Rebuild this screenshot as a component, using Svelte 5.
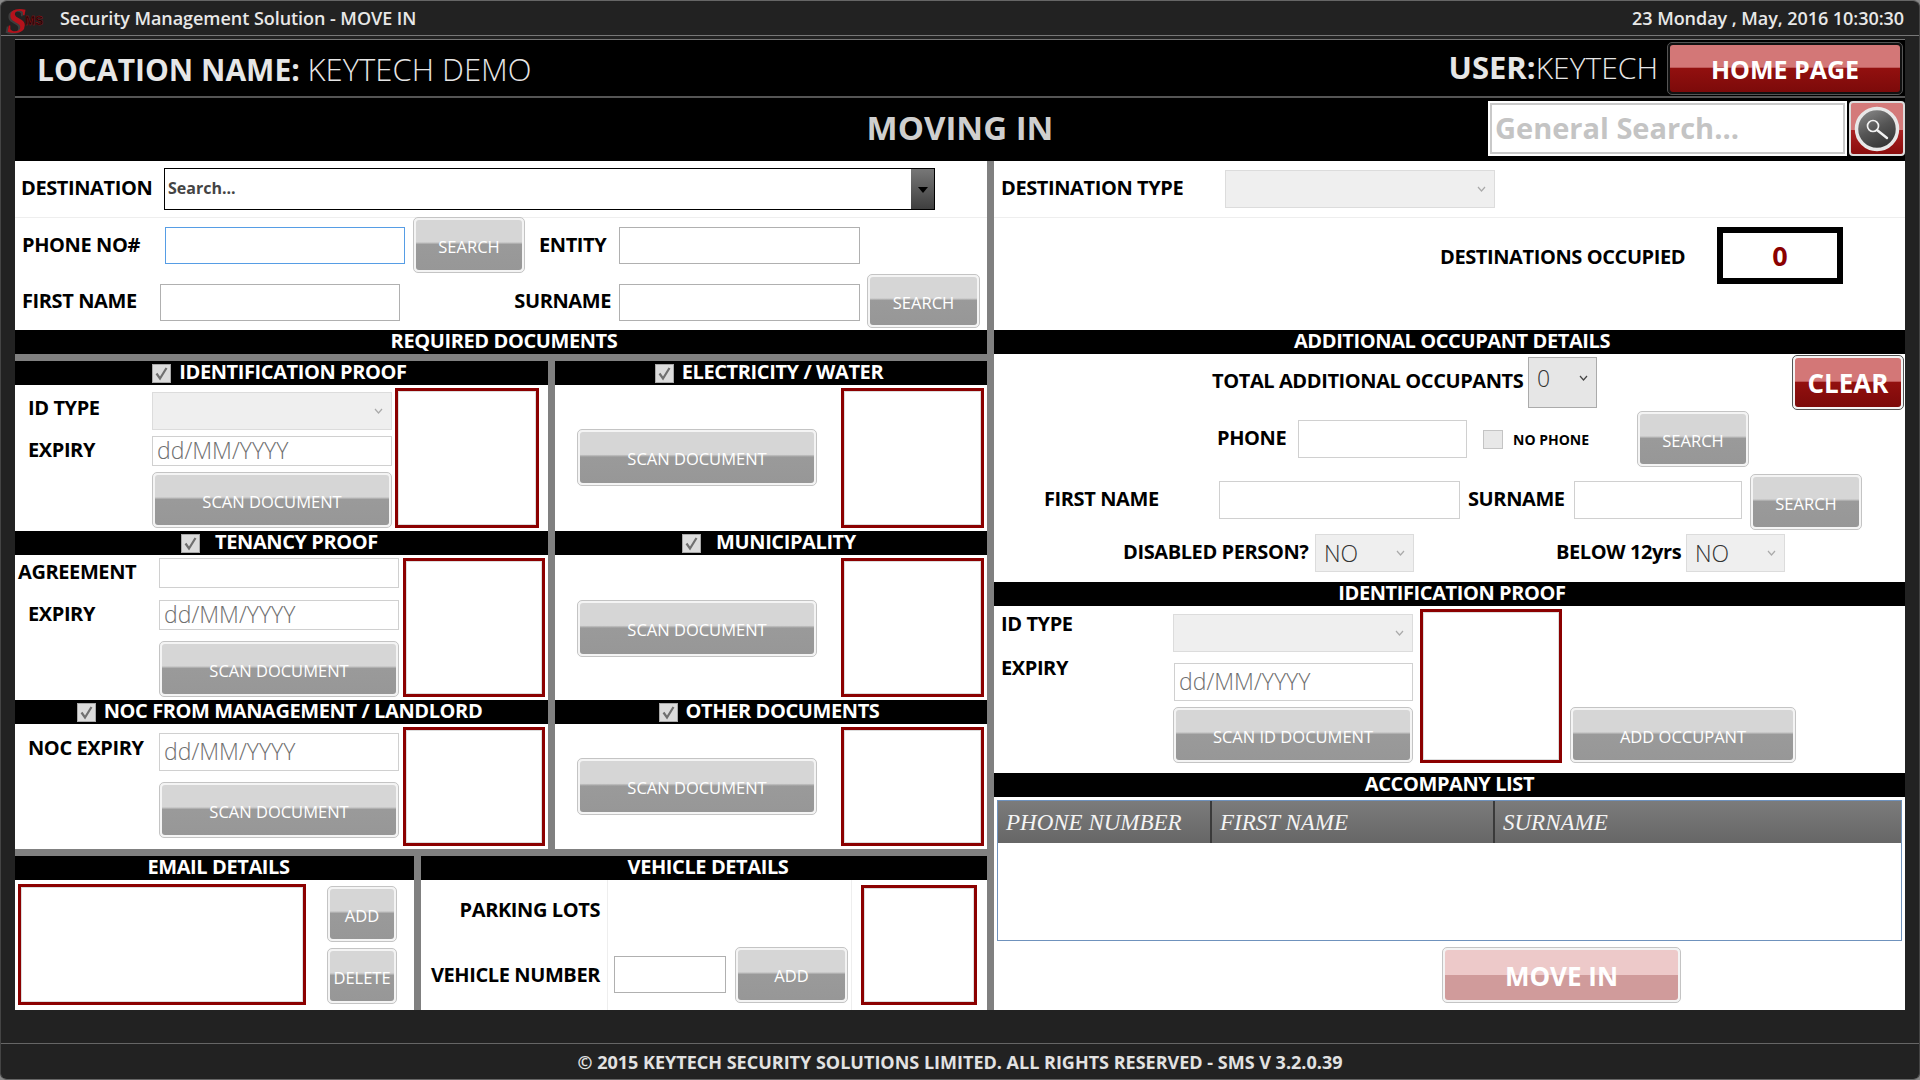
<script>
	const chevron = 'M1 1 L4.5 5 L8 1';
</script>

{#snippet btn(text, cls = '')}
	<button type="button" class={`btn ${cls}`}><span>{text}</span></button>
{/snippet}

{#snippet sel(text, cls = '')}
	<div class={`sel ${cls}`}>
		<span>{text}</span>
		<svg width="9" height="6" viewBox="0 0 9 6"><path d={chevron} fill="none" stroke="currentColor" stroke-width="1.2" /></svg>
	</div>
{/snippet}

{#snippet check()}
	<svg class="check" width="19" height="19" viewBox="0 0 19 19">
		<rect x="0.5" y="0.5" width="18" height="18" fill="#dcdcdc" stroke="#a8a8a8" />
		<path d="M4.5 9.5 L8 14.5 L14.5 4" fill="none" stroke="#707070" stroke-width="2.2" />
	</svg>
{/snippet}

{#snippet head(text, cls = '', checked = false)}
	<div class={`head ${cls}`}>
		{#if checked}{@render check()}{/if}
		<span>{text}</span>
	</div>
{/snippet}

<div class="window">
	<header class="titlebar">
		<svg class="logo" width="46" height="34" viewBox="0 0 46 34">
			<text x="6" y="32" class="logo-s">S</text>
			<text x="24" y="24" class="logo-ms">MS</text>
		</svg>
		<span class="app-title">Security Management Solution - MOVE IN</span>
		<span class="clock">23 Monday , May, 2016 10:30:30</span>
	</header>

	<main class="content">
		<div class="loc-bar">
			<div class="loc"><b>LOCATION NAME:</b> <span>KEYTECH DEMO</span></div>
			<div class="user"><b>USER:</b><span>KEYTECH</span></div>
			{@render btn('HOME PAGE', 'red home')}
		</div>

		<div class="move-bar">
			<h1>MOVING IN</h1>
			<div class="general">
				<input class="general-input" placeholder="General Search..." />
				<button type="button" class="glass" aria-label="Search">
					<svg width="48" height="48" viewBox="0 0 48 48">
						<defs>
							<linearGradient id="orb" x1="0.2" y1="0" x2="0.7" y2="1">
								<stop offset="0" stop-color="#8a8a8a" />
								<stop offset="0.5" stop-color="#555" />
								<stop offset="1" stop-color="#333" />
							</linearGradient>
						</defs>
						<circle cx="24" cy="24" r="20.5" fill="url(#orb)" stroke="#e8e8e8" stroke-width="3.5" />
						<circle cx="20" cy="21" r="5.5" fill="none" stroke="#f2f2f2" stroke-width="1.7" />
						<path d="M24 25 L34 33" stroke="#f2f2f2" stroke-width="2.4" stroke-linecap="round" />
					</svg>
				</button>
			</div>
		</div>

		<div class="columns">
			<section class="left">
				<div class="row dest-row">
					<span class="lab lab-dest">DESTINATION</span>
					<div class="combo">
						<span>Search...</span>
						<i class="combo-arrow"></i>
					</div>
				</div>
				<div class="row phone-row">
					<span class="lab lab-phone">PHONE NO#</span>
					<input class="inp focus w240" />
					{@render btn('SEARCH', 'search-a')}
					<span class="lab lab-entity">ENTITY</span>
					<input class="inp w241" />
				</div>
				<div class="row name-row">
					<span class="lab lab-first">FIRST NAME</span>
					<input class="inp w240" />
					<span class="lab lab-surname">SURNAME</span>
					<input class="inp w241" />
					{@render btn('SEARCH', 'search-b')}
				</div>

				{@render head('REQUIRED DOCUMENTS', 'head-req')}

				<div class="docs">
					<div class="doc">
						{@render head('IDENTIFICATION PROOF', 'sub', true)}
						<div class="panel form-id">
							<span class="lab pad13 mid">ID TYPE</span>
							{@render sel('', 'bottom h38')}
							<div class="scan scan-tall"></div>
							<span class="lab pad13 mid">EXPIRY</span>
							<input class="inp date h30" placeholder="dd/MM/YYYY" />
							{@render btn('SCAN DOCUMENT', 'col2')}
						</div>
					</div>
					<div class="doc">
						{@render head('ELECTRICITY / WATER', 'sub', true)}
						<div class="panel side side-a">
							{@render btn('SCAN DOCUMENT', 'side-btn')}
							<div class="scan"></div>
						</div>
					</div>

					<div class="doc">
						{@render head('TENANCY PROOF', 'sub wide', true)}
						<div class="panel form-ten">
							<span class="lab pad3 mid">AGREEMENT</span>
							<input class="inp h30" />
							<div class="scan scan-tall"></div>
							<span class="lab pad13 mid">EXPIRY</span>
							<input class="inp date h30 bottom" placeholder="dd/MM/YYYY" />
							{@render btn('SCAN DOCUMENT', 'col2')}
						</div>
					</div>
					<div class="doc">
						{@render head('MUNICIPALITY', 'sub wide', true)}
						<div class="panel side side-b">
							{@render btn('SCAN DOCUMENT', 'side-btn')}
							<div class="scan"></div>
						</div>
					</div>

					<div class="doc">
						{@render head('NOC FROM MANAGEMENT / LANDLORD', 'sub', true)}
						<div class="panel form-noc">
							<span class="lab pad13 mid">NOC EXPIRY</span>
							<input class="inp date h38 bottom" placeholder="dd/MM/YYYY" />
							<div class="scan scan-tall"></div>
							{@render btn('SCAN DOCUMENT', 'col2 noc-btn')}
						</div>
					</div>
					<div class="doc">
						{@render head('OTHER DOCUMENTS', 'sub', true)}
						<div class="panel side side-c">
							{@render btn('SCAN DOCUMENT', 'side-btn')}
							<div class="scan"></div>
						</div>
					</div>
				</div>

				<div class="bottom-row">
					<div class="doc">
						{@render head('EMAIL DETAILS', 'sub email-head')}
						<div class="panel email">
							<div class="scan email-box"></div>
							<div class="email-btns">
								{@render btn('ADD', 'small')}
								{@render btn('DELETE', 'small')}
							</div>
						</div>
					</div>
					<div class="doc">
						{@render head('VEHICLE DETAILS', 'sub veh-head')}
						<div class="panel vehicle">
							<span class="lab veh-lab">PARKING LOTS</span>
							<div class="veh-cell"></div>
							<div class="scan veh-box"></div>
							<span class="lab veh-lab">VEHICLE NUMBER</span>
							<div class="veh-cell veh-fields">
								<input class="inp veh-input" />
								{@render btn('ADD', 'veh-add')}
							</div>
						</div>
					</div>
				</div>
			</section>

			<section class="right">
				<div class="row dest-row">
					<span class="lab lab-type">DESTINATION TYPE</span>
					{@render sel('', 'w270 h38')}
				</div>
				<div class="occupied">
					<span class="lab lab-occ">DESTINATIONS OCCUPIED</span>
					<div class="occ-box">0</div>
				</div>

				{@render head('ADDITIONAL OCCUPANT DETAILS', 'head-add')}

				<div class="occ-form">
					<div class="row occ-a">
						<span class="lab lab-total">TOTAL ADDITIONAL OCCUPANTS</span>
						{@render sel('0', 'total')}
						{@render btn('CLEAR', 'red clear')}
					</div>
					<div class="row occ-b">
						<span class="lab lab-ophone">PHONE</span>
						<input class="inp ophone" />
						<i class="nophone-box"></i>
						<span class="nophone">NO PHONE</span>
						{@render btn('SEARCH', 'search-c')}
					</div>
					<div class="row occ-c">
						<span class="lab lab-ofirst">FIRST NAME</span>
						<input class="inp ofirst" />
						<span class="lab lab-osur">SURNAME</span>
						<input class="inp osur" />
						{@render btn('SEARCH', 'search-d')}
					</div>
					<div class="row occ-d">
						<span class="lab lab-dis">DISABLED PERSON?</span>
						{@render sel('NO', 'yesno')}
						<span class="lab lab-below">BELOW 12yrs</span>
						{@render sel('NO', 'yesno')}
					</div>
				</div>

				{@render head('IDENTIFICATION PROOF', 'head-add')}

				<div class="panel form-occ">
					<span class="lab occ-type">ID TYPE</span>
					{@render sel('', 'bottom h38')}
					<div class="scan scan-tall"></div>
					<span class="lab occ-exp">EXPIRY</span>
					<input class="inp date h38 bottom occ-date" placeholder="dd/MM/YYYY" />
					{@render btn('SCAN ID DOCUMENT', 'col2 occ-btn')}
					{@render btn('ADD OCCUPANT', 'occ-add')}
				</div>

				{@render head('ACCOMPANY LIST')}

				<div class="table">
					<div class="thead">
						<span class="th th1">PHONE NUMBER</span>
						<span class="th th2">FIRST NAME</span>
						<span class="th">SURNAME</span>
					</div>
				</div>
				{@render btn('MOVE IN', 'move')}
			</section>
		</div>
	</main>

	<footer class="footer">© 2015 KEYTECH SECURITY SOLUTIONS LIMITED. ALL RIGHTS RESERVED - SMS V 3.2.0.39</footer>
</div>

<style>
	:global(body) {
		background: #8a8a8a;
	}
	.window {
		box-sizing: border-box;
		width: 1920px;
		height: 1080px;
		display: flex;
		flex-direction: column;
		background: #222;
		border: 1px solid #666;
		border-left-color: #444;
		border-right-color: #444;
		border-radius: 7px;
		overflow: hidden;
		font-family: 'Open Sans', 'Noto Sans', sans-serif;
	}
	.titlebar {
		height: 34px;
		flex: none;
		display: flex;
		align-items: center;
		border-bottom: 1px solid #777;
		color: #e8e8e8;
		font-size: 18px;
		font-weight: 600;
		letter-spacing: -0.05px;
	}
	.logo {
		overflow: visible;
	}
	.logo-s {
		font: bold italic 36px 'Liberation Serif', serif;
		fill: #b5121b;
		filter: drop-shadow(-2px 1px 0 #3d3d3d);
	}
	.logo-ms {
		font: bold 12px 'Liberation Sans', sans-serif;
		fill: #1a0505;
		stroke: #a01015;
		stroke-width: 0.4px;
	}
	.app-title {
		margin: -1px 0 0 13px;
	}
	.clock {
		margin: 0 15px 0 auto;
	}
	.content {
		flex: none;
		margin: 3px 14px 0;
		width: 1890px;
		border-top: 1px solid #777;
		color: #000;
	}

	.loc-bar {
		height: 56px;
		display: flex;
		align-items: center;
		background: #000;
		border-bottom: 2px solid #555;
		color: #e6e6e6;
		font-size: 30px;
		white-space: nowrap;
	}
	.loc {
		margin: 2px 0 0 22px;
		font-weight: 300;
	}
	.loc span {
		font-size: 31px;
	}
	.loc b, .user b {
		font-weight: 700;
	}
	.user {
		margin: -3px 9px 0 auto;
		font-weight: 300;
	}
	.user b {
		font-size: 31px;
	}
	.move-bar {
		height: 63px;
		position: relative;
		display: flex;
		align-items: center;
		justify-content: center;
		background: #000;
	}
	.move-bar h1 {
		margin: -4px 0 0;
		font-size: 33px;
		font-weight: 700;
		color: #cfcfcf;
	}
	.general {
		position: absolute;
		right: 0;
		top: 3px;
		display: flex;
	}
	.general-input {
		box-sizing: border-box;
		width: 359px;
		height: 55px;
		border: 2px solid #fff;
		outline: 2px solid #c9c9c9;
		outline-offset: -4px;
		padding: 0 4px 2px 5px;
		font: 700 29px 'Open Sans', sans-serif;
	}
	.general-input::placeholder {
		color: #c4c4c4;
	}
	.glass {
		box-sizing: border-box;
		width: 56px;
		height: 55px;
		padding: 0;
		margin-left: 2px;
		border: 2px solid #dcdcdc;
		border-radius: 4px;
		background: linear-gradient(#d47a7a 0 52%, #a22 52%, #8a0d0d);
		display: flex;
		align-items: center;
		justify-content: center;
	}

	.columns {
		display: grid;
		grid-template-columns: 972px 911px;
		column-gap: 7px;
		background: #808080;
		height: 849px;
	}
	.left, .right {
		display: flex;
		flex-direction: column;
		background: #fff;
		min-width: 0;
	}
	.row {
		display: flex;
		align-items: center;
		flex: none;
		white-space: nowrap;
	}
	.dest-row {
		height: 56px;
		border-bottom: 1px solid #eee;
	}
	.phone-row, .name-row {
		height: 56px;
	}
	.lab {
		flex: none;
		box-sizing: border-box;
		font-size: 20px;
		line-height: 28px;
		padding-bottom: 2px;
		font-weight: 700;
		letter-spacing: -0.4px;
		color: #000;
		white-space: nowrap;
	}
	.lab-dest {
		width: 143px;
		margin-left: 6px;
	}
	.lab-phone {
		width: 143px;
		margin-left: 7px;
	}
	.lab-first {
		width: 138px;
		margin-left: 7px;
	}
	.lab-entity {
		width: 80px;
		margin-left: 14px;
	}
	.lab-surname {
		width: 211px;
		text-align: right;
		margin-right: 8px;
	}
	.lab-type {
		width: 224px;
		margin-left: 7px;
	}

	.inp {
		box-sizing: border-box;
		flex: none;
		min-width: 0;
		height: 37px;
		padding: 0 4px;
		border: 1px solid #d0d0d0;
		background: #fff;
		border-radius: 0;
		outline: none;
	}
	.w240 { width: 240px; }
	.w241 { width: 241px; }
	.h30 { height: 30px; }
	.h38 { height: 38px; }
	.focus {
		border-color: #569de5;
	}
	.name-row .inp, .phone-row .inp:not(.focus) {
		border-color: #b0b0b0;
	}
	.phone-row .inp {
		margin-top: -2px;
	}
	.date {
		font: 300 23px 'Open Sans', sans-serif;
		padding: 0 4px 2px;
	}
	.date::placeholder {
		color: #6f6f6f;
		opacity: 1;
	}
	.bottom {
		align-self: end;
	}

	.combo {
		box-sizing: border-box;
		width: 771px;
		height: 42px;
		display: flex;
		align-items: center;
		justify-content: space-between;
		border: 1px solid #000;
		padding-left: 3px;
		font-size: 16px;
		font-weight: 700;
		color: #444;
	}
	.combo span {
		margin-top: -2px;
	}
	.combo-arrow {
		width: 23px;
		height: 40px;
		background: linear-gradient(#777, #3f3f3f);
		display: flex;
		align-items: center;
		justify-content: center;
	}
	.combo-arrow::after {
		content: '';
		border: 5px solid transparent;
		border-top: 6px solid #000;
		margin-top: 6px;
	}

	.sel {
		box-sizing: border-box;
		flex: none;
		display: flex;
		align-items: center;
		justify-content: space-between;
		padding: 0 8px;
		background: #efefef;
		border: 1px solid #dcdcdc;
		color: #aaa;
	}
	.w270 { width: 270px; }
	.sel span {
		font: 300 23px 'Open Sans', sans-serif;
		color: #333;
	}

	.btn {
		box-sizing: border-box;
		flex: none;
		display: block;
		padding: 2px;
		border: 1px solid #c4c4c4;
		border-radius: 5px;
		background: #f4f4f4;
		font-family: inherit;
	}
	.btn span {
		display: flex;
		align-items: center;
		justify-content: center;
		height: 100%;
		border-radius: 3px;
		padding-top: 2px;
		box-sizing: border-box;
		background: linear-gradient(#d6d6d6 0 44%, #bbb 46%, #9a9a9a 49%, #979797 100%);
		color: #fff;
		font-size: 16.5px;
		font-weight: 400;
		white-space: nowrap;
	}
	.red {
		border-color: #555;
	}
	.red span {
		background: linear-gradient(#d37777 0 47%, #92100f 50%, #7c0a0a 100%);
		color: #fff;
		font-weight: 700;
	}
	.home {
		width: 236px;
		height: 53px;
		margin-right: 2px;
		background: #111;
	}
	.home span {
		font-size: 25px;
	}
	.search-a {
		width: 112px;
		height: 56px;
		margin: -2px 0 0 8px;
	}
	.search-b {
		width: 113px;
		height: 54px;
		margin: -2px 0 0 7px;
	}

	.head {
		flex: none;
		height: 24px;
		display: flex;
		align-items: center;
		justify-content: center;
		background: #000;
		color: #fff;
		font-size: 20px;
		font-weight: 700;
		letter-spacing: -0.4px;
		white-space: nowrap;
	}
	.head span {
		margin-top: -3px;
	}
	.head-req {
		padding-left: 6px;
	}
	.head-add {
		padding-left: 5px;
	}
	.sub {
		gap: 8px;
		padding-right: 4px;
	}
	.wide {
		gap: 15px;
	}
	.email-head {
		padding: 0 0 0 8px;
	}
	.veh-head {
		padding: 0 0 0 8px;
	}
	.check {
		flex: none;
	}

	.docs {
		display: grid;
		grid-template-columns: 533px 432px;
		grid-template-rows: 170px 169px 149px;
		column-gap: 7px;
		padding: 7px 0;
		background: #808080;
	}
	.doc {
		display: flex;
		flex-direction: column;
		min-width: 0;
	}
	.panel {
		flex: 1;
		background: #fff;
		padding: 3px 0;
		min-height: 0;
	}
	.scan {
		box-sizing: border-box;
		border: 3px solid #8b0000;
		outline: 1px solid #ddd;
		outline-offset: -4px;
		background: #fff;
	}
	.scan-tall {
		grid-row: 1 / span 3;
		grid-column: 3;
	}
	.pad13 { padding-left: 13px; }
	.pad3 { padding-left: 3px; }
	.mid { align-self: center; }

	.form-id {
		display: grid;
		grid-template-columns: 137px 240px 147px;
		grid-template-rows: 42px 30px 56px;
		row-gap: 6px;
	}
	.form-id .scan-tall {
		margin-left: 3px;
	}
	.form-ten {
		display: grid;
		grid-template-columns: 144px 240px 146px;
		grid-template-rows: 30px 31px 56px;
		row-gap: 11px;
	}
	.form-ten .scan-tall, .form-noc .scan-tall {
		margin-left: 4px;
	}
	.form-noc {
		display: grid;
		grid-template-columns: 144px 240px 146px;
		grid-template-rows: 44px 64px;
		row-gap: 11px;
	}
	.form-noc .scan-tall {
		grid-row: 1 / span 2;
	}
	.col2 {
		grid-column: 2;
		grid-row: 3;
		height: 56px;
	}
	.noc-btn {
		grid-row: 2;
	}

	.side {
		display: flex;
		align-items: flex-start;
	}
	.side .scan {
		align-self: stretch;
		width: 143px;
		margin-left: 24px;
	}
	.side-btn {
		width: 240px;
		height: 57px;
		margin-left: 22px;
	}
	.side-a :global(.side-btn) { margin-top: 41px; }
	.side-b :global(.side-btn) { margin-top: 42px; }
	.side-c :global(.side-btn) { margin-top: 31px; }

	.bottom-row {
		display: grid;
		grid-template-columns: 399px 566px;
		column-gap: 7px;
		background: #808080;
		height: 154px;
	}
	.email {
		display: flex;
		padding: 4px 0 5px 3px;
	}
	.email-box {
		width: 288px;
	}
	.email-btns {
		display: flex;
		flex-direction: column;
		gap: 6px;
		margin: 2px 0 0 21px;
	}
	.small {
		width: 70px;
		height: 56px;
	}
	.vehicle {
		display: grid;
		grid-template-columns: 187px 244px 135px;
		grid-template-rows: 59px 71px;
		padding: 0;
	}
	.veh-lab {
		align-self: stretch;
		display: flex;
		align-items: center;
		justify-content: flex-end;
		padding: 0 7px 0 0;
		border-right: 1px solid #eee;
	}
	.veh-cell {
		border-right: 1px solid #eee;
	}
	.veh-fields {
		display: flex;
		align-items: center;
		padding-left: 6px;
	}
	.veh-input {
		width: 112px;
		height: 37px;
		border-color: #b0b0b0;
	}
	.veh-add {
		width: 113px;
		height: 56px;
		margin-left: 9px;
	}
	.veh-box {
		grid-column: 3;
		grid-row: 1 / span 2;
		margin: 5px 10px 5px 9px;
	}

	.occupied {
		height: 112px;
		flex: none;
		display: flex;
		align-items: flex-start;
		padding: 9px 0 0 446px;
		box-sizing: border-box;
	}
	.lab-occ {
		width: 277px;
		margin-top: 16px;
	}
	.occ-box {
		box-sizing: border-box;
		width: 126px;
		height: 57px;
		border: 6px solid #000;
		display: flex;
		align-items: center;
		justify-content: center;
		color: #8b0000;
		font-size: 27px;
		font-weight: 700;
	}

	.occ-form {
		height: 228px;
		flex: none;
	}
	.occ-a {
		height: 57px;
		padding-left: 218px;
	}
	.lab-total {
		width: 316px;
		margin-top: -2px;
	}
	.total {
		width: 69px;
		height: 51px;
		background: #e6e6e6;
		border-color: #ababab;
		color: #444;
		padding-bottom: 9px;
	}
	.clear {
		width: 112px;
		height: 55px;
		margin-left: 195px;
	}
	.clear span {
		font-size: 26px;
		padding-top: 0;
	}
	.occ-b {
		height: 56px;
		margin-bottom: 7px;
	}
	.lab-ophone {
		width: 81px;
		margin-left: 223px;
	}
	.ophone {
		width: 169px;
		height: 38px;
	}
	.nophone-box {
		box-sizing: border-box;
		width: 20px;
		height: 19px;
		margin-left: 16px;
		background: #e8e8e8;
		border: 1px solid #c4c4c4;
	}
	.nophone {
		width: 124px;
		margin-left: 10px;
		font-size: 14px;
		font-weight: 700;
	}
	.search-c {
		width: 112px;
		height: 56px;
	}
	.occ-c {
		height: 56px;
		margin-bottom: 4px;
	}
	.lab-ofirst {
		width: 175px;
		margin: -5px 0 0 50px;
	}
	.ofirst {
		width: 241px;
		height: 38px;
		margin-top: -4px;
	}
	.lab-osur {
		width: 106px;
		margin: -5px 0 0 8px;
	}
	.osur {
		width: 168px;
		height: 38px;
		margin-top: -4px;
	}
	.search-d {
		width: 112px;
		height: 56px;
		margin-left: 8px;
	}
	.occ-d {
		height: 38px;
	}
	.lab-dis {
		width: 192px;
		margin-left: 129px;
	}
	.lab-below {
		width: 130px;
		margin-left: 142px;
	}
	.yesno {
		width: 99px;
		height: 38px;
	}

	.form-occ {
		flex: none;
		height: 167px;
		box-sizing: border-box;
		padding: 3px 0 10px 7px;
		display: grid;
		grid-template-columns: 172px 240px 149px 234px;
		grid-template-rows: 43px 49px 62px;
	}
	.form-occ .scan-tall {
		margin-left: 7px;
	}
	.occ-type {
		align-self: start;
		margin-top: 1px;
	}
	.occ-exp {
		grid-column: 1;
		grid-row: 2;
		align-self: start;
		margin-top: 2px;
	}
	.occ-date {
		grid-column: 2;
		grid-row: 2;
		margin-left: 1px;
	}
	.occ-btn {
		align-self: end;
	}
	.occ-add {
		grid-column: 4;
		grid-row: 3;
		align-self: end;
		height: 56px;
		margin-left: 8px;
	}

	.table {
		flex: none;
		box-sizing: border-box;
		height: 141px;
		margin: 3px 3px 0;
		border: 1px solid #6f92bd;
	}
	.thead {
		height: 42px;
		display: flex;
		background: linear-gradient(#7b7b7b, #666);
	}
	.th {
		display: flex;
		align-items: center;
		padding: 1px 0 0 8px;
		font: italic 23px 'Liberation Serif', serif;
		color: #f4f4f4;
		white-space: nowrap;
	}
	.th1 {
		width: 204px;
		border-right: 2px solid #3a3a3a;
	}
	.th2 {
		width: 273px;
		border-right: 2px solid #3a3a3a;
	}
	.move {
		width: 239px;
		height: 56px;
		margin: 6px 0 0 448px;
	}
	.move span {
		background: linear-gradient(#edc9c9 0 49%, #d09b9b 50%, #d09b9b 100%);
		font-size: 26px;
		font-weight: 700;
		color: #fff;
	}

	.footer {
		margin-top: auto;
		height: 35px;
		flex: none;
		display: flex;
		align-items: center;
		justify-content: center;
		border-top: 1px solid #666;
		color: #e2e2e2;
		font-size: 18px;
		font-weight: 700;
	}
</style>
